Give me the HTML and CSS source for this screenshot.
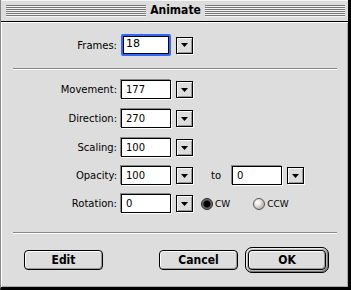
FILE: index.html
```html
<!DOCTYPE html>
<html lang="en">
<head>
    <meta charset="UTF-8">
    <title>Animate</title>
    <link rel="stylesheet" href="styles.css">
</head>
<body>

    <div class="window">
        <!-- Title bar -->
        <div class="titlebar">
            <span class="stripes"></span>
            <span class="title">Animate</span>
            <span class="stripes"></span>
        </div>

        <div class="content">
            <div class="row row-frames">
                <span class="label">Frames:</span>
                <div class="field focus">18</div>
                <span class="arrow"><svg width="7" height="4" viewBox="0 0 7 4"><polygon points="0,0 7,0 3.5,4" fill="#000"/></svg></span>
            </div>

            <div class="sep"></div>

            <div class="row row-move">
                <span class="label">Movement:</span>
                <div class="field">177</div>
                <span class="arrow"><svg width="7" height="4" viewBox="0 0 7 4"><polygon points="0,0 7,0 3.5,4" fill="#000"/></svg></span>
            </div>
            <div class="row row-dir">
                <span class="label">Direction:</span>
                <div class="field">270</div>
                <span class="arrow"><svg width="7" height="4" viewBox="0 0 7 4"><polygon points="0,0 7,0 3.5,4" fill="#000"/></svg></span>
            </div>
            <div class="row row-scale">
                <span class="label">Scaling:</span>
                <div class="field">100</div>
                <span class="arrow"><svg width="7" height="4" viewBox="0 0 7 4"><polygon points="0,0 7,0 3.5,4" fill="#000"/></svg></span>
            </div>
            <div class="row row-opacity">
                <span class="label">Opacity:</span>
                <div class="field">100</div>
                <span class="arrow"><svg width="7" height="4" viewBox="0 0 7 4"><polygon points="0,0 7,0 3.5,4" fill="#000"/></svg></span>
                <span class="to">to</span>
                <div class="field field-to">0</div>
                <span class="arrow"><svg width="7" height="4" viewBox="0 0 7 4"><polygon points="0,0 7,0 3.5,4" fill="#000"/></svg></span>
            </div>
            <div class="row row-rot">
                <span class="label">Rotation:</span>
                <div class="field">0</div>
                <span class="arrow"><svg width="7" height="4" viewBox="0 0 7 4"><polygon points="0,0 7,0 3.5,4" fill="#000"/></svg></span>
                <span class="radio on"></span><span class="radio-text">CW</span>
                <span class="radio radio-ccw"></span><span class="radio-text">CCW</span>
            </div>

            <div class="sep sep-bottom"></div>

            <!-- Buttons -->
            <div class="buttons">
                <div class="btn btn-edit">Edit</div>
                <div class="btn btn-cancel">Cancel</div>
                <div class="default-ring"><div class="btn btn-ok">OK</div></div>
            </div>
        </div>
    </div>

</body>
</html>
```

FILE: styles.css
```css
/* Page */
body { margin: 0; background: #ddd; font-family: "DejaVu Sans", sans-serif; }

/* Window frame */
.window { width: 351px; height: 290px; box-sizing: border-box; background: #ddd; border-left: 1px solid #888; border-right: 3px solid #000; border-bottom: 3px solid #000; display: flex; flex-direction: column; }

/* Title bar */
.titlebar { height: 21px; border-bottom: 1px solid #000; display: flex; align-items: center; padding: 0 3px 0 5px; box-shadow: inset 0 1px 0 #f4f4f4; }
.stripes { flex: 1; height: 12px; background: repeating-linear-gradient(to bottom, #777 0, #777 1px, #f2f2f2 1px, #f2f2f2 2px); }
.title { font-family: "DejaVu Sans Condensed", "DejaVu Sans", sans-serif; font-weight: bold; font-size: 12px; padding: 0 4px; color: #000; line-height: 21px; }

/* Content */
.content { flex: 1; box-shadow: inset 1px 1px 0 #fff, inset -1px -1px 0 #aaa; }

.row { display: flex; align-items: center; height: 19px; }
.row-frames { height: 22px; margin-top: 12px; }
.row-move { margin-top: 10px; }
.row-dir { margin-top: 10px; }
.row-scale { margin-top: 10px; }
.row-opacity { margin-top: 9px; }
.row-rot { margin-top: 9px; }

.label { width: 116px; margin-right: 4px; text-align: right; font-size: 10px; color: #000; }

.field { width: 50px; height: 19px; box-sizing: border-box; border: 1px solid #000; background: #fff; font-size: 10px; line-height: 17px; padding-left: 4px; box-shadow: -1px -1px 0 #888, 1px 1px 0 #fff; }
.field.focus { height: 22px; border: 2px solid #3366ff; border-radius: 2px; line-height: 16px; padding-left: 3px; box-shadow: inset 0 0 0 1px #000; font-size: 11px; }

.arrow { width: 17px; height: 17px; box-sizing: border-box; margin-left: 5px; border: 1px solid #000; background: #ddd; display: flex; align-items: center; justify-content: center; box-shadow: inset 1px 1px 0 #fff, inset -1px -1px 0 #999, 1px 1px 0 #fff; }

.to { font-size: 10px; margin-left: 18px; }
.field-to { margin-left: 11px; }

/* Radios */
.radio { width: 12px; height: 12px; border-radius: 50%; margin-left: 8px; box-sizing: border-box; border: 1px solid #555; background: radial-gradient(circle at 35% 35%, #fff 0, #e8e8e8 30%, #aaa 80%, #888 100%); }
.radio.on { background: radial-gradient(circle, #000 0, #000 40%, #555 55%, #999 80%, #666 100%); border-color: #222; }
.radio-ccw { margin-left: 23px; }
.radio-text { font-size: 9px; margin-left: 2px; }

/* Separators */
.sep { height: 1px; border-bottom: 1px solid #fff; background: #888; margin: 12px 11px 0 12px; }
.sep-bottom { margin-top: 19px; }

/* Buttons */
.buttons { display: flex; align-items: center; margin-top: 13px; height: 26px; }
.btn { width: 79px; height: 20px; box-sizing: border-box; border: 1px solid #000; border-radius: 4px; background: #ddd; box-shadow: inset 1px 1px 0 #fff, inset -1px -1px 0 #999; font-family: "DejaVu Sans Condensed", "DejaVu Sans", sans-serif; font-weight: bold; font-size: 12px; text-align: center; line-height: 18px; color: #000; }
.btn-edit { margin-left: 23px; }
.btn-cancel { margin-left: 56px; }
.default-ring { margin-left: 7px; padding: 2px; border: 1px solid #000; border-radius: 7px; background: #bbb; box-shadow: inset 1px 1px 0 #eee, inset -1px -1px 0 #777; }
.btn-ok { width: 78px; }
```
